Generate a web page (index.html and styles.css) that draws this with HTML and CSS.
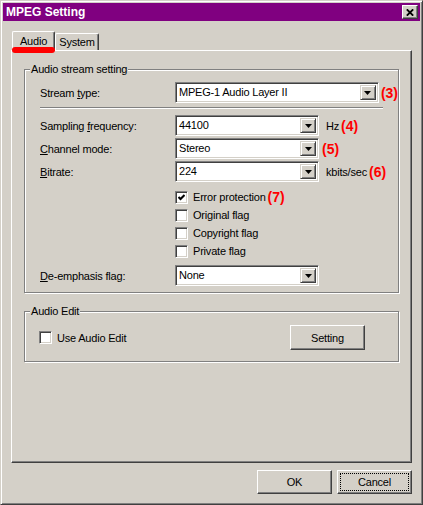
FILE: index.html
```html
<!DOCTYPE html>
<html lang="en">
<head>
    <meta charset="UTF-8">
    <title>MPEG Setting</title>
    <link rel="stylesheet" href="styles.css">
</head>
<body>
    <div class="window">
        <div class="titlebar">
            <span class="title">MPEG Setting</span>
            <button class="close-btn">
                <svg width="8" height="7" viewBox="0 0 8 7"><path d="M0.8 0.3 L7.2 6.7 M7.2 0.3 L0.8 6.7" stroke="#000" stroke-width="1.8"/></svg>
            </button>
        </div>
        <div class="dialog">
            <div class="tabs">
                <div class="tab active">Audio</div>
                <div class="tab">System</div>
                <span class="mark-line"></span>
            </div>
            <div class="panel">
                <fieldset class="group stream">
                    <legend>Audio stream setting</legend>
                    <div class="row">
                        <span class="label">Stream <u>t</u>ype:</span>
                        <div class="combo wide">
                            <span class="combo-text">MPEG-1 Audio Layer II</span>
                            <span class="combo-btn"><svg width="7" height="4" viewBox="0 0 7 4"><path d="M0 0h7L3.5 4z" fill="#000"/></svg></span>
                        </div>
                        <span class="note">(3)</span>
                    </div>
                    <div class="divider"></div>
                    <div class="row first">
                        <span class="label">Sampling <u>f</u>requency:</span>
                        <div class="combo">
                            <span class="combo-text">44100</span>
                            <span class="combo-btn"><svg width="7" height="4" viewBox="0 0 7 4"><path d="M0 0h7L3.5 4z" fill="#000"/></svg></span>
                        </div>
                        <span class="unit">Hz</span>
                        <span class="note">(4)</span>
                    </div>
                    <div class="row">
                        <span class="label"><u>C</u>hannel mode:</span>
                        <div class="combo">
                            <span class="combo-text">Stereo</span>
                            <span class="combo-btn"><svg width="7" height="4" viewBox="0 0 7 4"><path d="M0 0h7L3.5 4z" fill="#000"/></svg></span>
                        </div>
                        <span class="note gap">(5)</span>
                    </div>
                    <div class="row">
                        <span class="label"><u>B</u>itrate:</span>
                        <div class="combo">
                            <span class="combo-text">224</span>
                            <span class="combo-btn"><svg width="7" height="4" viewBox="0 0 7 4"><path d="M0 0h7L3.5 4z" fill="#000"/></svg></span>
                        </div>
                        <span class="unit">kbits/sec</span>
                        <span class="note">(6)</span>
                    </div>
                    <div class="checks">
                        <div class="check">
                            <span class="box"><svg width="7" height="7" viewBox="0 0 7 7"><path d="M0.5 3 L2.5 5 L6.5 1" stroke="#000" stroke-width="2" fill="none"/></svg></span>
                            <span>Error protection</span>
                            <span class="note">(7)</span>
                        </div>
                        <div class="check">
                            <span class="box"></span>
                            <span>Original flag</span>
                        </div>
                        <div class="check">
                            <span class="box"></span>
                            <span>Copyright flag</span>
                        </div>
                        <div class="check">
                            <span class="box"></span>
                            <span>Private flag</span>
                        </div>
                    </div>
                    <div class="row last">
                        <span class="label"><u>D</u>e-emphasis flag:</span>
                        <div class="combo">
                            <span class="combo-text">None</span>
                            <span class="combo-btn"><svg width="7" height="4" viewBox="0 0 7 4"><path d="M0 0h7L3.5 4z" fill="#000"/></svg></span>
                        </div>
                    </div>
                </fieldset>

                <fieldset class="group edit">
                    <legend>Audio Edit</legend>
                    <div class="edit-row">
                        <div class="check">
                            <span class="box"></span>
                            <span>Use Audio Edit</span>
                        </div>
                        <button class="btn tall">Setting</button>
                    </div>
                </fieldset>
            </div>
            <div class="actions">
                <button class="btn">OK</button>
                <button class="btn focus">Cancel</button>
            </div>
        </div>
    </div>
</body>
</html>
```

FILE: styles.css
```css
body {
    margin: 0;
    font-family: 'Liberation Sans', Arial, sans-serif;
    font-size: 11px;
    letter-spacing: -0.2px;
    color: #000;
    background-color: #d4d0c8;
    overflow: hidden;
}
.window {
    width: 423px;
    height: 505px;
    box-sizing: border-box;
    border: 1px solid;
    border-color: #d4d0c8 #404040 #404040 #d4d0c8;
    box-shadow: inset 1px 1px #fff, inset -1px -1px #808080;
    padding: 2px;
    background-color: #d4d0c8;
}
.titlebar {
    height: 18px;
    background-color: #800080;
    display: flex;
    align-items: center;
    justify-content: space-between;
    padding: 0 2px 0 3px;
}
.title {
    color: #fff;
    font-weight: bold;
    font-size: 12px;
    letter-spacing: 0;
}
.close-btn {
    width: 16px;
    height: 14px;
    padding: 0;
    box-sizing: border-box;
    border: 1px solid;
    border-color: #fff #404040 #404040 #fff;
    box-shadow: inset -1px -1px #808080;
    background-color: #d4d0c8;
    display: flex;
    align-items: center;
    justify-content: center;
}
.dialog {
    padding: 10px 8px 0 8px;
}
.tabs {
    display: flex;
    align-items: flex-end;
    height: 19px;
    padding-left: 1px;
    position: relative;
    z-index: 1;
}
.tab {
    box-sizing: border-box;
    height: 17px;
    width: 44px;
    padding-top: 2px;
    line-height: 13px;
    text-align: center;
    border: 1px solid;
    border-bottom: none;
    border-color: #fff #404040 #404040 #fff;
    box-shadow: inset -1px 0 #808080;
    border-radius: 2px 2px 0 0;
    background-color: #d4d0c8;
}
.tab.active {
    width: 43px;
    height: 20px;
    padding-top: 3px;
    margin-bottom: -1px;
}
.mark-line {
    position: absolute;
    left: 1px;
    top: 16px;
    width: 43px;
    height: 6px;
    border-radius: 3px;
    background-color: #f00;
}
.panel {
    height: 413px;
    box-sizing: border-box;
    border: 1px solid;
    border-color: #fff #404040 #404040 #fff;
    box-shadow: inset -1px -1px #808080;
    padding: 12px 12px 0 12px;
}
.group {
    margin: 0;
    min-inline-size: 0;
    border: 1px solid #808080;
    box-shadow: 1px 1px 0 #fff, inset 1px 1px 0 #fff;
}
.group legend {
    margin-left: 5px;
    padding: 0 1px;
    line-height: 13px;
    background-color: #d4d0c8;
}
.stream {
    padding: 6px 0;
}
.edit {
    margin-top: 12px;
    padding: 7px 0 11px 0;
}
.row {
    display: flex;
    align-items: center;
    height: 21px;
    padding-left: 15px;
    margin-top: 2px;
}
.row:first-of-type {
    margin-top: 0;
}
.row.first {
    margin-top: 6px;
}
.row.last {
    margin-top: 5px;
}
.label {
    width: 135px;
    flex-shrink: 0;
}
.combo {
    display: flex;
    width: 144px;
    height: 21px;
    box-sizing: border-box;
    border: 1px solid;
    border-color: #808080 #fff #fff #808080;
    box-shadow: inset 1px 1px #404040, inset -1px -1px #d4d0c8;
    background-color: #fff;
    padding: 2px;
}
.combo.wide {
    width: 208px;
}
.combo-text {
    flex: 1;
    padding-left: 1px;
    line-height: 15px;
}
.combo-btn {
    width: 16px;
    height: 15px;
    box-sizing: border-box;
    border: 1px solid;
    border-color: #d4d0c8 #404040 #404040 #d4d0c8;
    box-shadow: inset 1px 1px #fff, inset -1px -1px #808080;
    background-color: #d4d0c8;
    display: flex;
    align-items: center;
    justify-content: center;
}
.unit {
    margin-left: 7px;
}
.note {
    color: #f00;
    font-weight: bold;
    font-size: 14px;
    letter-spacing: 0;
    margin-left: 2px;
}
.note.gap {
    margin-left: 3px;
}
.divider {
    margin: 4px 0 0 15px;
    width: 343px;
    border-top: 1px solid #808080;
    border-bottom: 1px solid #fff;
}
.checks {
    margin-top: 6px;
    padding-left: 150px;
}
.check {
    display: flex;
    align-items: center;
    height: 18px;
}
.box {
    width: 13px;
    height: 13px;
    box-sizing: border-box;
    border: 1px solid;
    border-color: #808080 #fff #fff #808080;
    box-shadow: inset 1px 1px #404040, inset -1px -1px #d4d0c8;
    background-color: #fff;
    margin-right: 5px;
    display: flex;
    align-items: center;
    justify-content: center;
}
.edit-row {
    display: flex;
    align-items: center;
    justify-content: space-between;
    padding: 0 33px 0 14px;
}
.btn {
    width: 75px;
    height: 24px;
    padding: 0;
    box-sizing: border-box;
    border: 1px solid;
    border-color: #fff #404040 #404040 #fff;
    box-shadow: inset -1px -1px #808080;
    background-color: #d4d0c8;
    font-family: 'Liberation Sans', Arial, sans-serif;
    font-size: 11px;
    letter-spacing: -0.2px;
    color: #000;
}
.btn.tall {
    height: 25px;
}
.btn.focus {
    position: relative;
}
.btn.focus::after {
    content: "";
    position: absolute;
    inset: 2px;
    border: 1px dotted #000;
}
.actions {
    display: flex;
    justify-content: flex-end;
    gap: 5px;
    margin-top: 7px;
}
```
